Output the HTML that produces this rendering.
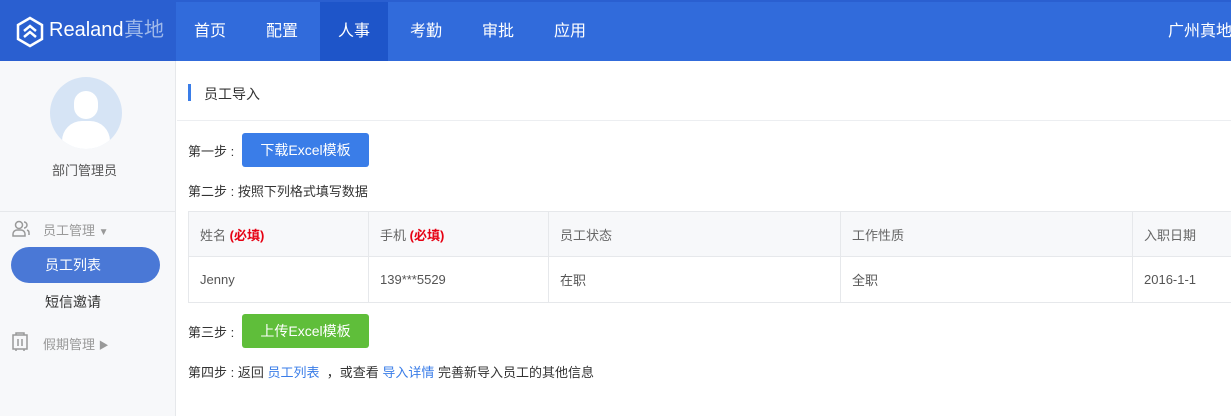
<!DOCTYPE html>
<html><head><meta charset="utf-8"><style>
*{margin:0;padding:0;box-sizing:border-box}
body{width:1231px;height:416px;overflow:hidden;background:#fff;font-family:"Liberation Sans","Noto Sans CJK SC",sans-serif;color:#333;position:relative}
.hd{position:absolute;left:0;top:0;width:1231px;height:61px;background:#316bdb;border-top:2px solid #2a5fd0}
.logo{position:absolute;left:0;top:0;width:176px;height:59px;background:#2a5fd0;color:#fff}
.nav{position:absolute;top:0;height:59px;line-height:59px;color:#fff;font-size:16px;text-align:center;width:68px}
.side{position:absolute;left:0;top:61px;width:176px;height:355px;background:#f7f8fa;border-right:1px solid #e6e8eb}
.abs{position:absolute}
.t{font-size:13px;color:#333}
table{border-collapse:collapse;position:absolute;left:188px;top:211px;font-size:13px;table-layout:fixed;width:1064px}
td{border:1px solid #e6e8eb;padding-left:11px;color:#555;white-space:nowrap}
tr.h td{background:#f7f8fa;height:45px;color:#666}
tr.b td{height:46px}
.red{color:#e60012;font-weight:bold}
.lk{color:#3a7de8}
</style></head><body>
<div class="hd">
 <div class="logo">
  <svg class="abs" style="left:15px;top:14px" width="30" height="32" viewBox="0 0 30 32"><path d="M15 2 L27 9 L27 23 L15 30 L3 23 L3 9 Z" fill="none" stroke="#fff" stroke-width="2.5"/><path d="M9 15 L15 10 L21 15 M9 21 L15 16 L21 21" fill="none" stroke="#fff" stroke-width="2.5"/></svg>
  <span class="abs" style="left:49px;top:14px;font-size:20px;line-height:28px">Realand</span>
  <span class="abs" style="left:124px;top:14px;font-size:20px;line-height:28px;color:#9fb9ea">真地</span>
 </div>
 <div class="nav" style="left:176px">首页</div>
 <div class="nav" style="left:248px">配置</div>
 <div class="nav" style="left:320px;background:#1e55c9">人事</div>
 <div class="nav" style="left:392px">考勤</div>
 <div class="nav" style="left:464px">审批</div>
 <div class="nav" style="left:536px">应用</div>
 <div class="nav" style="left:1168px;width:80px;text-align:left">广州真地</div>
</div>
<div class="side">
 <div class="abs" style="left:50px;top:16px;width:72px;height:72px;border-radius:50%;background:#d6e4f5;overflow:hidden">
  <div class="abs" style="left:24px;top:14px;width:24px;height:28px;border-radius:12px;background:#fff"></div>
  <div class="abs" style="left:12px;top:44px;width:48px;height:40px;border-radius:20px 20px 0 0;background:#fff"></div>
 </div>
 <div class="abs t" style="left:52px;top:99px;color:#555">部门管理员</div>
 <div class="abs" style="left:0;top:150px;width:175px;border-top:1px solid #e6e8eb"></div>
 <svg class="abs" style="left:11px;top:159px" width="20" height="18" viewBox="0 0 20 18"><circle cx="8" cy="5" r="3.5" fill="none" stroke="#999" stroke-width="1.5"/><path d="M2 16 v-2 a4 4 0 0 1 4 -4 h4 a4 4 0 0 1 4 4 v2 z" fill="none" stroke="#999" stroke-width="1.5"/><path d="M13 2 a3 3 0 0 1 0 6 M16 10 a3 3 0 0 1 2 3 v2" fill="none" stroke="#999" stroke-width="1.5"/></svg>
 <div class="abs t" style="left:43px;top:159px;color:#999">员工管理 <span style="font-size:10px">▼</span></div>
 <div class="abs" style="left:11px;top:186px;width:149px;height:36px;border-radius:18px;background:#4a78d6;color:#fff;font-size:14px;line-height:36px;padding-left:34px">员工列表</div>
 <div class="abs t" style="left:45px;top:231px;font-size:14px">短信邀请</div>
 <svg class="abs" style="left:11px;top:271px" width="18" height="20" viewBox="0 0 18 20"><rect x="2" y="3" width="14" height="14" fill="none" stroke="#999" stroke-width="1.5"/><path d="M7 7 v7 M11 7 v7 M5 3 v-2 h8 v2 M5 17 v2 M13 17 v2" stroke="#999" stroke-width="1.5" fill="none"/></svg>
 <div class="abs t" style="left:43px;top:273px;color:#999">假期管理 <span style="font-size:10px">▶</span></div>
</div>
<div class="abs" style="left:188px;top:84px;width:3px;height:17px;background:#3a7de8"></div>
<div class="abs" style="left:204px;top:84px;font-size:14px;color:#333">员工导入</div>
<div class="abs" style="left:177px;top:120px;width:1054px;border-top:1px solid #eceef1"></div>
<div class="abs t" style="left:188px;top:141px">第一步 :</div>
<div class="abs" style="left:242px;top:133px;width:127px;height:34px;border-radius:3px;background:#3a7de8;color:#fff;font-size:14px;line-height:34px;text-align:center">下载Excel模板</div>
<div class="abs t" style="left:188px;top:181px">第二步 : 按照下列格式填写数据</div>
<table>
<colgroup><col style="width:180px"><col style="width:180px"><col style="width:292px"><col style="width:292px"><col style="width:120px"></colgroup>
<tr class="h"><td>姓名 <span class="red">(必填)</span></td><td>手机 <span class="red">(必填)</span></td><td>员工状态</td><td>工作性质</td><td>入职日期</td></tr>
<tr class="b"><td>Jenny</td><td>139***5529</td><td>在职</td><td>全职</td><td>2016-1-1</td></tr>
</table>
<div class="abs t" style="left:188px;top:322px">第三步 :</div>
<div class="abs" style="left:242px;top:314px;width:127px;height:34px;border-radius:3px;background:#5fbe3a;color:#fff;font-size:14px;line-height:34px;text-align:center">上传Excel模板</div>
<div class="abs t" style="left:188px;top:362px">第四步 : 返回 <span class="lk">员工列表</span> &nbsp;，或查看 <span class="lk">导入详情</span> 完善新导入员工的其他信息</div>
</body></html>
